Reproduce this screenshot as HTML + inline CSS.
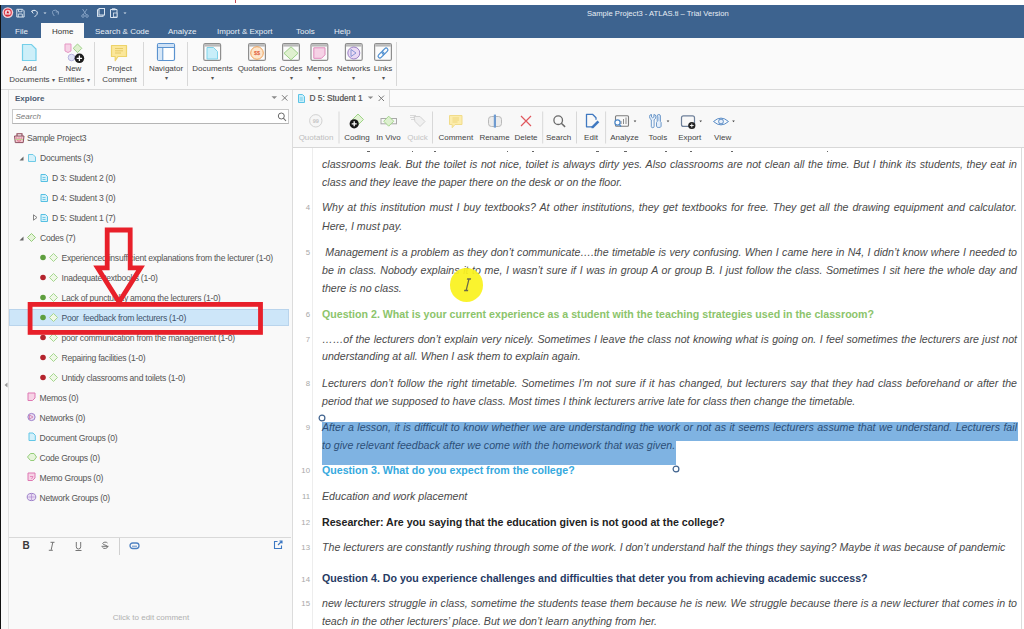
<!DOCTYPE html>
<html><head><meta charset="utf-8">
<style>
*{margin:0;padding:0;box-sizing:border-box}
html,body{width:1024px;height:629px;overflow:hidden;background:#fff;font-family:"Liberation Sans",sans-serif;position:relative}
.a{position:absolute}
.t{position:absolute;white-space:nowrap;line-height:1}
#titlebar{left:0;top:5px;width:1024px;height:33px;background:#3d638f}
#blk{left:0;top:5px;width:1px;height:624px;background:#111}
.tab{color:#e8eef5;font-size:8px;top:28px}
#ribbon{left:1px;top:38px;width:1023px;height:52px;background:#fafafa;border-bottom:1px solid #d9d9d9}
.rl{font-size:8px;color:#444;text-align:center;transform:translateX(-50%)}
.sep{background:#d6d6d6;width:1px}
#left{left:1px;top:90px;width:291px;height:539px;background:#f9f9f9}
.ti{font-size:8.6px;letter-spacing:-0.25px;color:#555;margin-top:-0.4px}
#doc{left:292px;top:89px;width:732px;height:540px;background:#fff;border-left:1px solid #dcdcdc}
.p{position:absolute;left:322px;width:695px;font-size:10.7px;font-style:italic;color:#3a3a3a;line-height:18.3px;text-align:justify;text-align-last:left}
.ln{position:absolute;font-size:7.8px;line-height:1;color:#a8a8a8;right:714px;text-align:right}
.dl{position:absolute;left:322px;width:695px;font-size:10.63px;line-height:1;height:11px;white-space:nowrap;overflow:visible}
.dl.jj{text-align:justify;text-align-last:justify;white-space:normal}
.i{font-style:italic;color:#4a4a4a}.h{font-style:italic;color:#2c4f78}.g{font-weight:bold;color:#8cc46b}.c{font-weight:bold;color:#36a9de}.k{font-weight:bold;color:#222}.n{font-weight:bold;color:#263a63}
</style></head><body>
<div class="a" id="titlebar"></div>
<div class="a" id="blk"></div>
<div class="t" style="left:587px;top:10px;font-size:7.6px;color:#e8eef5">Sample Project3 - ATLAS.ti – Trial Version</div>
<!-- tabs -->
<div class="a" style="left:41px;top:23px;width:43px;height:15px;background:#fafafa"></div>
<div class="t tab" style="left:15px">File</div>
<div class="t tab" style="left:52px;color:#333">Home</div>
<div class="t tab" style="left:95px">Search &amp; Code</div>
<div class="t tab" style="left:168px">Analyze</div>
<div class="t tab" style="left:217px">Import &amp; Export</div>
<div class="t tab" style="left:296px">Tools</div>
<div class="t tab" style="left:334px">Help</div>

<div class="a" id="ribbon"></div>

<!-- ribbon icons -->
<svg class="a" style="left:0;top:38px" width="400" height="51" viewBox="0 38 400 51">
 <!-- Add documents -->
 <path d="M22.5 44.5h9l4.5 4.5v11.5h-13.5z" fill="#cdeff9" stroke="#74cfe9" stroke-width="1.2"/>
 <!-- New entities -->
 <path d="M65 44h6v7l-3 1.5-3-1.5z" fill="#f6d2e6" stroke="#e597c4" stroke-width="1"/>
 <path d="M77.5 44l4.3 4.3-4.3 4.3-4.3-4.3z" fill="#dff0cf" stroke="#9fd18a" stroke-width="1"/>
 <circle cx="71.5" cy="57.5" r="3.3" fill="#dfe3f5" stroke="#b7b4df" stroke-width="1"/>
 <circle cx="79.4" cy="58.3" r="4.8" fill="#1d1d1d"/>
 <path d="M79.4 55.6v5.4M76.7 58.3h5.4" stroke="#fff" stroke-width="1.3"/>
 <!-- project comment -->
 <path d="M111.5 45.5h15v11h-8.5l-2.8 4.2v-4.2h-3.7z" fill="#fbe79a" stroke="#edd36a" stroke-width="1.2" stroke-linejoin="round"/>
 <path d="M115 48.5h8M115 50.8h8M115 53h6" stroke="#e2c45a" stroke-width="0.8"/>
 <!-- navigator -->
 <rect x="157.5" y="43.5" width="17" height="17" rx="1.5" fill="#fff" stroke="#5b93cf" stroke-width="1.2"/>
 <rect x="158" y="44" width="16" height="3" fill="#cfe2f6"/>
 <path d="M157.5 47.5h17" stroke="#5b93cf" stroke-width="1"/>
 <rect x="158.1" y="48" width="4.4" height="12" fill="#d8e8f8"/>
 <path d="M162.8 47.5v13" stroke="#5b93cf" stroke-width="1"/>
 <!-- frames -->
 <g fill="#fbfbfb" stroke="#8e8e8e" stroke-width="1.2">
  <rect x="203.8" y="43.6" width="16.8" height="16.8" rx="1.5"/>
  <rect x="248.6" y="43.6" width="16.8" height="16.8" rx="1.5"/>
  <rect x="282.6" y="43.6" width="16.8" height="16.8" rx="1.5"/>
  <rect x="311" y="43.6" width="16.8" height="16.8" rx="1.5"/>
  <rect x="345.4" y="43.6" width="16.8" height="16.8" rx="1.5"/>
  <rect x="374.6" y="43.6" width="16.8" height="16.8" rx="1.5"/>
 </g>
 <g fill="#b9b9b9">
  <rect x="204.4" y="44.2" width="15.6" height="2.4"/>
  <rect x="249.2" y="44.2" width="15.6" height="2.4"/>
  <rect x="283.2" y="44.2" width="15.6" height="2.4"/>
  <rect x="311.6" y="44.2" width="15.6" height="2.4"/>
  <rect x="346" y="44.2" width="15.6" height="2.4"/>
  <rect x="375.2" y="44.2" width="15.6" height="2.4"/>
 </g>
 <path d="M207 47.5h6.5l4 4v7.5h-10.5z" fill="#c8eef9" stroke="#7fd3ea" stroke-width="1"/>
 <circle cx="257" cy="53" r="6.3" fill="#fde6cc" stroke="#f0a25a" stroke-width="1"/>
 <text x="257" y="55.2" font-size="5.5" font-family="Liberation Sans" fill="#e0603a" text-anchor="middle" font-weight="bold">$$</text>
 <path d="M291 46.8l7 6.5-7 6.5-7-6.5z" fill="#dff0cf" stroke="#9fd18a" stroke-width="1"/>
 <path d="M313.8 47.8h11.2v7l-3.5 3.5h-7.7z" fill="#f6d2e6" stroke="#e08bbd" stroke-width="1"/>
 <circle cx="353.8" cy="53" r="6" fill="#ead9f3" stroke="#9a7fc6" stroke-width="1"/>
 <path d="M351 49.5l5 3.5-5 3.5z" fill="none" stroke="#7d8fd0" stroke-width="0.9"/>
 <g transform="rotate(-45 383 53)" fill="none" stroke="#4f8fd0" stroke-width="1.2"><rect x="376.8" y="51.2" width="7" height="3.6" rx="1.8"/><rect x="382.2" y="51.2" width="7" height="3.6" rx="1.8"/></g>
 <!-- separators -->
 <g stroke="#d8d8d8" stroke-width="1"><path d="M94.5 42v44M143.5 42v44M187.5 42v44M396.5 42v44"/></g>
</svg>
<div class="t rl" style="left:29.5px;top:65px">Add</div>
<div class="t rl" style="left:32px;top:75.5px">Documents <span style="font-size:5.5px;color:#555">▾</span></div>
<div class="t rl" style="left:73.4px;top:65px">New</div>
<div class="t rl" style="left:74px;top:75.5px">Entities <span style="font-size:5.5px;color:#555">▾</span></div>
<div class="t rl" style="left:119.5px;top:65px">Project</div>
<div class="t rl" style="left:119.5px;top:75.5px">Comment</div>
<div class="t rl" style="left:166px;top:65px">Navigator</div>
<div class="t rl" style="left:166px;top:75.5px;font-size:5.5px;color:#555">▾</div>
<div class="t rl" style="left:212.5px;top:65px">Documents</div>
<div class="t rl" style="left:212.5px;top:75.5px;font-size:5.5px;color:#555">▾</div>
<div class="t rl" style="left:257px;top:65px">Quotations</div>
<div class="t rl" style="left:291px;top:65px">Codes</div>
<div class="t rl" style="left:291px;top:75.5px;font-size:5.5px;color:#555">▾</div>
<div class="t rl" style="left:319.5px;top:65px">Memos</div>
<div class="t rl" style="left:319.5px;top:75.5px;font-size:5.5px;color:#555">▾</div>
<div class="t rl" style="left:353.5px;top:65px">Networks</div>
<div class="t rl" style="left:353px;top:75.5px;font-size:5.5px;color:#555">▾</div>
<div class="t rl" style="left:383px;top:65px">Links</div>
<div class="t rl" style="left:383px;top:75.5px;font-size:5.5px;color:#555">▾</div>

<div class="a" id="left"></div>
<div class="a" id="doc"></div>


<!-- document pane -->
<div class="a" style="left:292px;top:89px;width:732px;height:18px;background:#fbfbfb;border-top:1px solid #d9d9d9;border-bottom:1px solid #d6d6d6"></div>
<div class="a" style="left:292px;top:89px;width:98px;height:19px;background:#f9f9f9;border-right:1px solid #dadada;border-top:1px solid #d6d6d6"></div>
<div class="a" style="left:292px;top:107px;width:732px;height:41px;background:#f8f8f8;border-bottom:1px solid #d8d8d8"></div>
<div class="a" style="left:293px;top:148px;width:731px;height:481px;background:#fff"></div>
<div class="a" style="left:1021px;top:148px;width:1px;height:481px;background:#dcdcdc"></div>
<div class="a" style="left:311.5px;top:148px;width:0;height:481px;border-left:1px solid #ededed"></div>


<div class="dl i jj" style="top:159.3px">classrooms leak. But the toilet is not nice, toilet is always dirty yes. Also classrooms are not clean all the time. But I think its students, they eat in</div>
<div class="dl i" style="top:177.0px">class and they leave the paper there on the desk or on the floor.</div>

<div class="a" style="left:322px;top:422px;width:695.5px;height:19px;background:#7fb3e2"></div>
<div class="a" style="left:322px;top:440px;width:354px;height:24.5px;background:#7fb3e2"></div>
<svg class="a" style="left:316px;top:412px" width="12" height="12"><circle cx="6" cy="6" r="2.9" fill="#fff" stroke="#40638f" stroke-width="1.2"/></svg>
<svg class="a" style="left:670px;top:463px" width="12" height="12"><circle cx="6" cy="6" r="2.9" fill="#fff" stroke="#40638f" stroke-width="1.2"/></svg>
<div class="a" style="left:367px;top:150.5px;width:3px;height:1.2px;background:#666"></div><div class="a" style="left:412px;top:150.5px;width:1px;height:1.2px;background:#666"></div><div class="a" style="left:434px;top:150.5px;width:2px;height:1.2px;background:#666"></div><div class="a" style="left:507px;top:150.5px;width:1px;height:1.2px;background:#666"></div><div class="a" style="left:532px;top:150.5px;width:2px;height:1.2px;background:#666"></div><div class="a" style="left:596px;top:150.5px;width:3px;height:1.2px;background:#666"></div><div class="a" style="left:624px;top:150.5px;width:3px;height:1.2px;background:#666"></div><div class="a" style="left:665px;top:150.5px;width:2px;height:1.2px;background:#666"></div><div class="a" style="left:690px;top:150.5px;width:2px;height:1.2px;background:#666"></div><div class="a" style="left:731px;top:150.5px;width:2px;height:1.2px;background:#666"></div><div class="a" style="left:827px;top:150.5px;width:1px;height:1.2px;background:#666"></div>
<div class="ln" style="top:204.2px">4</div>
<div class="dl i jj" style="top:202.0px">Why at this institution must I buy textbooks? At other institutions, they get textbooks for free. They get all the drawing equipment and calculator.</div>
<div class="dl i" style="top:220.8px">Here, I must pay.</div>
<div class="ln" style="top:249.1px">5</div>
<div class="dl i jj" style="top:246.9px">&nbsp;Management is a problem as they don’t communicate….the timetable is very confusing. When I came here in N4, I didn’t know where I needed to</div>
<div class="dl i jj" style="top:265.2px">be in class. Nobody explains it to me, I wasn’t sure if I was in group A or group B. I just follow the class. Sometimes I sit here the whole day and</div>
<div class="dl i" style="top:283.1px">there is no class.</div>
<div class="ln" style="top:311.1px">6</div>
<div class="dl g" style="top:308.9px">Question 2. What is your current experience as a student with the teaching strategies used in the classroom?</div>
<div class="ln" style="top:335.9px">7</div>
<div class="dl i jj" style="top:333.7px">……of the lecturers don’t explain very nicely. Sometimes I leave the class not knowing what is going on. I feel sometimes the lecturers are just not</div>
<div class="dl i" style="top:351.2px">understanding at all. When I ask them to explain again.</div>
<div class="ln" style="top:380.4px">8</div>
<div class="dl i jj" style="top:378.2px">Lecturers don’t follow the right timetable. Sometimes I’m not sure if it has changed, but lecturers say that they had class beforehand or after the</div>
<div class="dl i" style="top:395.7px">period that we supposed to have class. Most times I think lecturers arrive late for class then change the timetable.</div>
<div class="ln" style="top:424.2px">9</div>
<div class="dl h jj" style="top:422.0px">After a lesson, it is difficult to know whether we are understanding the work or not as it seems lecturers assume that we understand. Lecturers fail</div>
<div class="dl h" style="top:439.7px">to give relevant feedback after we come with the homework that was given.</div>
<div class="ln" style="top:467.0px">10</div>
<div class="dl c" style="top:464.8px">Question 3. What do you expect from the college?</div>
<div class="ln" style="top:493.2px">11</div>
<div class="dl i" style="top:491.0px">Education and work placement</div>
<div class="ln" style="top:518.8px">12</div>
<div class="dl k" style="top:516.6px">Researcher: Are you saying that the education given is not good at the college?</div>
<div class="ln" style="top:543.8px">13</div>
<div class="dl i" style="top:541.6px">The lecturers are constantly rushing through some of the work. I don’t understand half the things they saying? Maybe it was because of pandemic</div>
<div class="ln" style="top:575.5px">14</div>
<div class="dl n" style="top:573.3px">Question 4. Do you experience challenges and difficulties that deter you from achieving academic success?</div>
<div class="ln" style="top:600.2px">15</div>
<div class="dl i jj" style="top:598.0px">new lecturers struggle in class, sometime the students tease them because he is new. We struggle because there is a new lecturer that comes in to</div>
<div class="dl i" style="top:616.2px">teach in the other lecturers’ place. But we don’t learn anything from her.</div>

<!-- doc tab -->
<svg class="a" style="left:296px;top:92px" width="12" height="12" viewBox="296 92 12 12"><path d="M298.5 94.5h4l2 2v6h-6z" fill="#c9eefa" stroke="#5cc4e6" stroke-width="1"/><path d="M299.8 98h3M299.8 100h3" stroke="#5cc4e6" stroke-width="0.8"/></svg>
<div class="t" style="left:309.5px;top:94.2px;font-size:8.3px;color:#4e4e4e;-webkit-text-stroke:0.2px #4e4e4e">D 5: Student 1</div>
<svg class="a" style="left:366px;top:94px" width="22" height="8" viewBox="366 94 22 8"><path d="M367.8 96.5h5.4l-2.7 2.6z" fill="#8a8a8a"/><path d="M378.6 95.6l5.4 5.4M384 95.6l-5.4 5.4" stroke="#7a7a7a" stroke-width="1"/></svg>

<div class="t" style="left:281px;top:93px;font-size:10px;color:#777;display:none">×</div>
<!-- doc toolbar -->
<svg class="a" style="left:292px;top:107px" width="460" height="40" viewBox="292 107 460 40">
 <g stroke="#d8d8d8" stroke-width="1"><path d="M339 111.5v32M432.5 111.5v32M542.7 111.5v32M576.5 111.5v32M605.6 111.5v32"/></g>
 <!-- quotation -->
 <circle cx="315.8" cy="120.8" r="6.2" fill="#f6f6f6" stroke="#d2d2d2" stroke-width="1"/>
 <text x="315.8" y="122.8" font-size="5.5" font-family="Liberation Sans" fill="#c4c4c4" text-anchor="middle" font-weight="bold">99</text>
 <!-- coding -->
 <path d="M358 114l5.5 5.5-5.5 5.5-5.5-5.5z" fill="#e3f3d6" stroke="#9fd487" stroke-width="1"/>
 <circle cx="354.2" cy="123.8" r="4.6" fill="#161616"/>
 <path d="M354.2 121.3v5M351.7 123.8h5" stroke="#fff" stroke-width="1.3"/>
 <!-- in vivo -->
 <rect x="381" y="118.5" width="5.5" height="5.3" fill="none" stroke="#a9a9a9" stroke-width="1"/>
 <rect x="391" y="118.5" width="5.5" height="5.3" fill="none" stroke="#a9a9a9" stroke-width="1"/>
 <path d="M388.7 116.2l5 5-5 5-5-5z" fill="#ddf0cf" stroke="#a5d68e" stroke-width="1"/>
 <!-- quick -->
 <path d="M414 116.5h6l5 5-5 5-5-5z" fill="#f0f0f0" stroke="#d2d2d2" stroke-width="1" transform="rotate(0)"/>
 <path d="M410 115.5h6M410 117.5h5M411 119.5h4" stroke="#cfcfcf" stroke-width="0.8"/>
 <!-- comment -->
 <path d="M449.5 115.5h12.5v9h-7l-2.8 3.2v-3.2h-2.7z" fill="#fcecab" stroke="#f1dc8a" stroke-width="1" stroke-linejoin="round"/>
 <path d="M452.5 118h6.5M452.5 120h6.5M452.5 122h5" stroke="#e8cf6a" stroke-width="0.7"/>
 <!-- rename -->
 <rect x="488.5" y="116.5" width="13" height="10" rx="3" fill="#ececec" stroke="#b9b9b9" stroke-width="1"/>
 <rect x="493.8" y="114.6" width="2.2" height="13" fill="#6f9bd0"/>
 <!-- delete -->
 <path d="M521 116l10 10M531 116l-10 10" stroke="#e0575d" stroke-width="1.2"/>
 <!-- search -->
 <circle cx="558.2" cy="120.2" r="4.3" fill="none" stroke="#6a6a6a" stroke-width="1.3"/>
 <path d="M561.3 123.3l3.8 3.6" stroke="#6a6a6a" stroke-width="1.5"/>
 <!-- edit -->
 <path d="M593 126.8h-6.5v-12.5h6l3.5 3.5v2" fill="none" stroke="#3f78c0" stroke-width="1.3" stroke-linejoin="round"/>
 <path d="M591.5 126.5l6-6 1.8 1.8-6 6h-1.8z" fill="#3f78c0"/>
 <!-- analyze -->
 <rect x="615.5" y="115.8" width="13" height="10.4" rx="1" fill="none" stroke="#7c7c7c" stroke-width="1.1"/>
 <path d="M621 124v-3M623.5 124v-5M626 124v-6.5" stroke="#8a8a8a" stroke-width="1"/>
 <circle cx="617.5" cy="122.5" r="2.6" fill="#fff" stroke="#4b86c6" stroke-width="1.2"/>
 <path d="M619.3 124.5l1.8 2" stroke="#4b86c6" stroke-width="1.2"/>
 <path d="M633.7 120.6h2.6l-1.3 1.6z" fill="#444"/>
 <!-- tools -->
 <path d="M649.5 116.5q0-2 2-2v2.5l1.2 0.8 1.2-0.8v-2.5q2 0 2 2q0 2.5-1.8 3.3v6.7q0 1.2-1.4 1.2t-1.4-1.2v-6.7q-1.8-0.8-1.8-3.3z" fill="#e4eefa" stroke="#5f8fc4" stroke-width="0.9"/>
 <path d="M652.7 120.5v5.5" stroke="#ffffff" stroke-width="0.8"/>
 <path d="M657.2 116q0-1.5 1.6-1.5t1.6 1.5v5.5l0.7 1v3.8q0 1.2-2.3 1.2t-2.3-1.2v-3.8l0.7-1z" fill="#e4eefa" stroke="#5f8fc4" stroke-width="0.9"/>
 <path d="M658.8 116.5v4.5" stroke="#9fc0e6" stroke-width="0.9"/>
 <path d="M666.7 120.6h2.6l-1.3 1.6z" fill="#444"/>
 <!-- export -->
 <rect x="681.5" y="115.8" width="13" height="10.6" rx="2" fill="none" stroke="#6d7f99" stroke-width="1.2"/>
 <circle cx="691.8" cy="125.5" r="3.6" fill="#222"/>
 <path d="M691.8 123.6v3.8M689.9 125.5h3.8" stroke="#fff" stroke-width="0.9"/>
 <path d="M699.4 120.6h2.6l-1.3 1.6z" fill="#444"/>
 <!-- view -->
 <path d="M713.5 121.5q7.5-6.8 15 0q-7.5 6.8-15 0z" fill="#f4f8fc" stroke="#5a8cc6" stroke-width="1"/>
 <circle cx="721" cy="121.5" r="2.4" fill="#e6eefa" stroke="#5a8cc6" stroke-width="1"/>
 <path d="M732.2 120.6h2.6l-1.3 1.6z" fill="#444"/>
</svg>
<div class="t rl" style="left:316px;top:133.6px;color:#bdbdbd">Quotation</div>
<div class="t rl" style="left:357px;top:133.6px">Coding</div>
<div class="t rl" style="left:388.5px;top:133.6px">In Vivo</div>
<div class="t rl" style="left:417.5px;top:133.6px;color:#c4c4c4">Quick</div>
<div class="t rl" style="left:455.8px;top:133.6px">Comment</div>
<div class="t rl" style="left:494.5px;top:133.6px">Rename</div>
<div class="t rl" style="left:526px;top:133.6px">Delete</div>
<div class="t rl" style="left:558.6px;top:133.6px">Search</div>
<div class="t rl" style="left:591px;top:133.6px">Edit</div>
<div class="t rl" style="left:624.4px;top:133.6px">Analyze</div>
<div class="t rl" style="left:657.8px;top:133.6px">Tools</div>
<div class="t rl" style="left:689.7px;top:133.6px">Export</div>
<div class="t rl" style="left:722.6px;top:133.6px">View</div>

<!-- left panel -->
<div class="a" style="left:8px;top:90px;width:1px;height:539px;background:#e2e2e2"></div>
<div class="a" style="left:291.5px;top:90px;width:1px;height:539px;background:#dcdcdc"></div>
<div class="t" style="left:15px;top:95px;font-size:8px;font-weight:bold;color:#4b5b72">Explore</div>
<svg class="a" style="left:270px;top:94px" width="20" height="8" viewBox="270 94 20 8"><path d="M271.5 96.3h5.6l-2.8 2.7z" fill="#8a8a8a"/><path d="M282 95.2l5.4 5.4M287.4 95.2l-5.4 5.4" stroke="#7a7a7a" stroke-width="1"/></svg>

<div class="a" style="left:12px;top:109px;width:277px;height:15px;background:#fff;border:1px solid #c9c9c9;border-bottom-color:#b5b5b5"></div>
<div class="t" style="left:15.5px;top:112.5px;font-size:8px;font-style:italic;color:#777">Search</div>
<svg class="a" style="left:276px;top:111px" width="12" height="12"><circle cx="5.3" cy="5" r="3" fill="none" stroke="#6a6a6a" stroke-width="1"/><path d="M7.4 7.2l2.6 2.8" stroke="#6a6a6a" stroke-width="1.1"/></svg>
<!-- tree -->
<svg class="a" style="left:0;top:125px" width="292" height="380" viewBox="0 125 292 380">
 <!-- project icon -->
 <path d="M17 136v-2.3h5v2.3" fill="none" stroke="#8a4050" stroke-width="1.1"/>
 <path d="M14.5 136h9.5l-0.8 6.6h-7.9z" fill="#efc9cf" stroke="#8e5060" stroke-width="1"/>
 <path d="M16.5 137.5l1.5 4M19 137.5v4.5M21.5 137.5l-1.5 4" stroke="#e0708a" stroke-width="0.9"/>
 <path d="M15.5 139.5h7.5" stroke="#b8d890" stroke-width="0.9"/>
 <!-- expand triangles -->
 <path d="M23.5 156.5v4h-4z" fill="#666"/>
 <path d="M23.5 236.5v4h-4z" fill="#666"/>
 <path d="M33.5 214.8l3.5 2.7-3.5 2.7z" fill="none" stroke="#777" stroke-width="0.9"/>
 <!-- documents icon -->
 <path d="M28.5 154.5h4.5l2.5 2.5v4.5h-7z" fill="#d6f1fa" stroke="#6fcbe6" stroke-width="1"/>
 <g fill="#d6f1fa" stroke="#56c0e2" stroke-width="1">
  <path d="M41 174.5h4.5l2 2v5h-6.5z"/>
  <path d="M41 194.5h4.5l2 2v5h-6.5z"/>
  <path d="M41 214.5h4.5l2 2v5h-6.5z"/>
 </g>
 <g stroke="#56c0e2" stroke-width="0.8"><path d="M42.5 177.5h3M42.5 179.5h3M42.5 197.5h3M42.5 199.5h3M42.5 217.5h3M42.5 219.5h3"/></g>
 <!-- codes icon -->
 <path d="M31.5 233.5l4 4-4 4-4-4z" fill="#e6f4da" stroke="#95cd7a" stroke-width="1"/>
 <!-- code rows -->
 <g fill="#5e9e3e"><circle cx="43" cy="257.5" r="2.8"/><circle cx="43" cy="297.5" r="2.8"/><circle cx="43" cy="317.5" r="2.8"/></g>
 <g fill="#b4232c"><circle cx="43" cy="277.5" r="2.8"/><circle cx="43" cy="337.5" r="2.8"/><circle cx="43" cy="357.5" r="2.8"/><circle cx="43" cy="377.5" r="2.8"/></g>
 <g fill="#eef7e6" stroke="#a6d78f" stroke-width="1">
  <path d="M53.5 253.5l4 4-4 4-4-4z"/><path d="M53.5 273.5l4 4-4 4-4-4z"/><path d="M53.5 293.5l4 4-4 4-4-4z"/>
  <path d="M53.5 313.5l4 4-4 4-4-4z"/><path d="M53.5 333.5l4 4-4 4-4-4z"/><path d="M53.5 353.5l4 4-4 4-4-4z"/><path d="M53.5 373.5l4 4-4 4-4-4z"/>
 </g>
 <!-- memos -->
 <path d="M28 393h7v5l-2.5 2.5h-4.5z" fill="#f7d3e6" stroke="#de79b3" stroke-width="1"/>
 <circle cx="31.5" cy="417" r="3.6" fill="#e8dcf3" stroke="#9c7fc9" stroke-width="1"/>
 <path d="M29.5 415l3.5 2-3.5 2z" fill="none" stroke="#d36b9e" stroke-width="0.7"/>
 <path d="M29 433h4l2.3 2.3v5.2h-6.3z" fill="#d3f0fa" stroke="#62c6e6" stroke-width="1" stroke-linejoin="round"/>
 <path d="M27.5 457l3-3.5h3.5l2.5 3.5-2.5 3.5h-3.5z" fill="#e6f4da" stroke="#95cd7a" stroke-width="1"/>
 <path d="M28 473h7v5l-2.5 2.5h-4.5z" fill="#f7d3e6" stroke="#de79b3" stroke-width="1"/>
 <path d="M30 476.5h3l-1.5 2.5" fill="none" stroke="#de79b3" stroke-width="0.8"/>
 <ellipse cx="31.5" cy="497" rx="4.3" ry="3.6" fill="#e8dcf3" stroke="#9c7fc9" stroke-width="1"/>
 <path d="M28.5 497h6M31.5 494v6" stroke="#b08ad0" stroke-width="0.7"/>
</svg>
<div class="a" style="left:9px;top:309px;width:280px;height:17px;background:#cde6f9;border:1px solid #b9d4ec"></div>
<svg class="a" style="left:36px;top:310px" width="24" height="15" viewBox="36 310 24 15"><circle cx="43" cy="317.5" r="2.8" fill="#5e9e3e"/><path d="M53.5 313.5l4 4-4 4-4-4z" fill="#eef7e6" stroke="#a6d78f" stroke-width="1"/></svg>
<div class="t ti" style="left:27px;top:134px">Sample Project3</div>
<div class="t ti" style="left:40px;top:154px">Documents (3)</div>
<div class="t ti" style="left:52px;top:174px">D 3: Student 2 (0)</div>
<div class="t ti" style="left:52px;top:194px">D 4: Student 3 (0)</div>
<div class="t ti" style="left:52px;top:214px">D 5: Student 1 (7)</div>
<div class="t ti" style="left:40px;top:234px">Codes (7)</div>
<div class="t ti" style="left:61.5px;top:254px">Experienced insufficient explanations from the lecturer (1-0)</div>
<div class="t ti" style="left:61.5px;top:274px">Inadequate textbooks (1-0)</div>
<div class="t ti" style="left:61.5px;top:294px">Lack of punctuality among the lecturers (1-0)</div>
<div class="t ti" style="left:61.5px;top:314px;color:#3f536b">Poor&nbsp; feedback from lecturers (1-0)</div>
<div class="t ti" style="left:61.5px;top:334px">poor communication from the management (1-0)</div>
<div class="t ti" style="left:61.5px;top:354px">Repairing facilities (1-0)</div>
<div class="t ti" style="left:61.5px;top:374px">Untidy classrooms and toilets (1-0)</div>
<div class="t ti" style="left:39.5px;top:394px">Memos (0)</div>
<div class="t ti" style="left:39.5px;top:414px">Networks (0)</div>
<div class="t ti" style="left:39.5px;top:434px">Document Groups (0)</div>
<div class="t ti" style="left:39.5px;top:454px">Code Groups (0)</div>
<div class="t ti" style="left:39.5px;top:474px">Memo Groups (0)</div>
<div class="t ti" style="left:39.5px;top:494px">Network Groups (0)</div>
<svg class="a" style="left:2px;top:381px" width="6" height="8"><path d="M5.5 1.5v5l-3-2.5z" fill="#9a9a9a"/></svg>
<!-- comment area -->
<div class="a" style="left:9px;top:537px;width:282px;height:1px;background:#d9d9d9"></div>
<div class="t" style="left:22.5px;top:541px;font-size:10px;font-weight:bold;color:#3a3a3a">B</div>
<svg class="a" style="left:45px;top:539px" width="70" height="14" viewBox="45 539 70 14">
 <path d="M50.5 542.3h4M52.8 542.3l-1.6 7.6M48.8 550.3h4" stroke="#666" stroke-width="0.9" fill="none"/>
 <path d="M76.3 542v4.8a2.2 2.2 0 0 0 4.4 0V542M75.5 550.5h6" stroke="#666" stroke-width="0.9" fill="none"/>
 <path d="M107.5 543a2.6 1.6 0 0 0-4.8 0.3c0 2 4.8 1.5 4.8 3.6a2.6 1.7 0 0 1-5 0.5M101.5 546.3h7" stroke="#666" stroke-width="0.9" fill="none"/>
</svg>
<div class="a" style="left:119px;top:538px;width:1px;height:17px;background:#d0d0d0"></div>
<svg class="a" style="left:129px;top:541px" width="11" height="10"><rect x="1" y="2" width="9" height="5.5" rx="2.7" fill="none" stroke="#4f82c2" stroke-width="1.3"/><path d="M3 5.2h5" stroke="#4f82c2" stroke-width="0.9"/></svg>
<svg class="a" style="left:273px;top:540px" width="10" height="10"><path d="M4.5 1.5h-3v7h7v-3" fill="none" stroke="#3c78c3" stroke-width="1.1"/><path d="M5 5l4-4M6.5 1h2.5v2.5" fill="none" stroke="#3c78c3" stroke-width="1.1"/></svg>
<div class="t" style="left:151px;top:614px;font-size:8px;color:#b0b0b0;transform:translateX(-50%)">Click to edit comment</div>



<!-- yellow cursor -->
<div class="a" style="left:449.5px;top:268px;width:33.5px;height:34px;border-radius:50%;background:rgba(250,242,30,0.93)"></div>
<svg class="a" style="left:460px;top:277px" width="12" height="16"><path d="M4.5 2h4M6.5 2v11.5M4.5 13.5h4" stroke="#6b6a4a" stroke-width="1.3" fill="none" transform="skewX(-14) translate(3,0)"/></svg>
<!-- red annotations -->
<svg class="a" style="left:0;top:0" width="300" height="400" viewBox="0 0 300 400">
 <rect x="30.1" y="304.4" width="230.4" height="28" fill="none" stroke="#e8202a" stroke-width="4.8"/>
 <path d="M107.2 230h23v37.8h10.4l-21.5 34.2-21.5-34.2h9.6z" fill="none" stroke="#e8202a" stroke-width="4.8" stroke-linejoin="miter"/>
</svg>
<!-- titlebar icons -->
<svg class="a" style="left:0;top:5px" width="140" height="18" viewBox="0 5 140 18">
 <circle cx="7.8" cy="12.6" r="5.4" fill="#f3d3da"/>
 <circle cx="7.8" cy="12.6" r="3.5" fill="none" stroke="#dc3a48" stroke-width="1.1"/>
 <path d="M7.8 10.5l1.3 2.8h-2.6z" fill="#c8101e"/>
 <path d="M6 15.2h3.6" stroke="#c8101e" stroke-width="1"/>
 <path d="M16.8 9.3h5.8l1.5 1.5v6.2h-7.3z" fill="none" stroke="#dbe5f0" stroke-width="1"/>
 <path d="M18.5 9.5v2.3h3.5v-2.3M18.3 17v-3h4v3" fill="none" stroke="#dbe5f0" stroke-width="0.9"/>
 <path d="M31.5 11.3l2.8-1.3M31.5 11.3l1.8 2.2M31.8 11.2q3.8-1.8 5.5 0.8q1 2-2.8 5" fill="none" stroke="#dbe5f0" stroke-width="1"/>
 <path d="M43.5 12.5l1.5 1.5 1.5-1.5z" fill="#dbe5f0"/>
 <path d="M58.5 11.8l-0.3 2.8M58.5 11.8l-2.8 0.2M58.3 12q-2.5-3-5-1.5q-2 1.5 1 5.5" fill="none" stroke="#8aa6c7" stroke-width="1"/>
 <path d="M82.5 9l4 6M87 9l-4 6" stroke="#8aa6c7" stroke-width="0.9"/>
 <circle cx="83" cy="16" r="1.3" fill="none" stroke="#8aa6c7" stroke-width="0.9"/><circle cx="87" cy="16" r="1.3" fill="none" stroke="#8aa6c7" stroke-width="0.9"/>
 <rect x="97.5" y="9.8" width="5.5" height="6.5" fill="#3d638f" stroke="#dbe5f0" stroke-width="1"/>
 <rect x="99" y="8.5" width="5.5" height="6.5" fill="#3d638f" stroke="#dbe5f0" stroke-width="1"/>
 <path d="M110.5 9.5h6.5v8h-6.5z" fill="none" stroke="#dbe5f0" stroke-width="1"/>
 <rect x="112" y="8.3" width="3.5" height="2" fill="#dbe5f0"/>
 <rect x="113.5" y="13" width="3.5" height="4" fill="#3d638f" stroke="#dbe5f0" stroke-width="0.8"/>
 <path d="M123.5 12.5l1.5 1.5 1.5-1.5z" fill="#dbe5f0"/>
</svg>
<div class="a" style="left:235px;top:0;width:1px;height:3px;background:#c84a55"></div>
</body></html>
